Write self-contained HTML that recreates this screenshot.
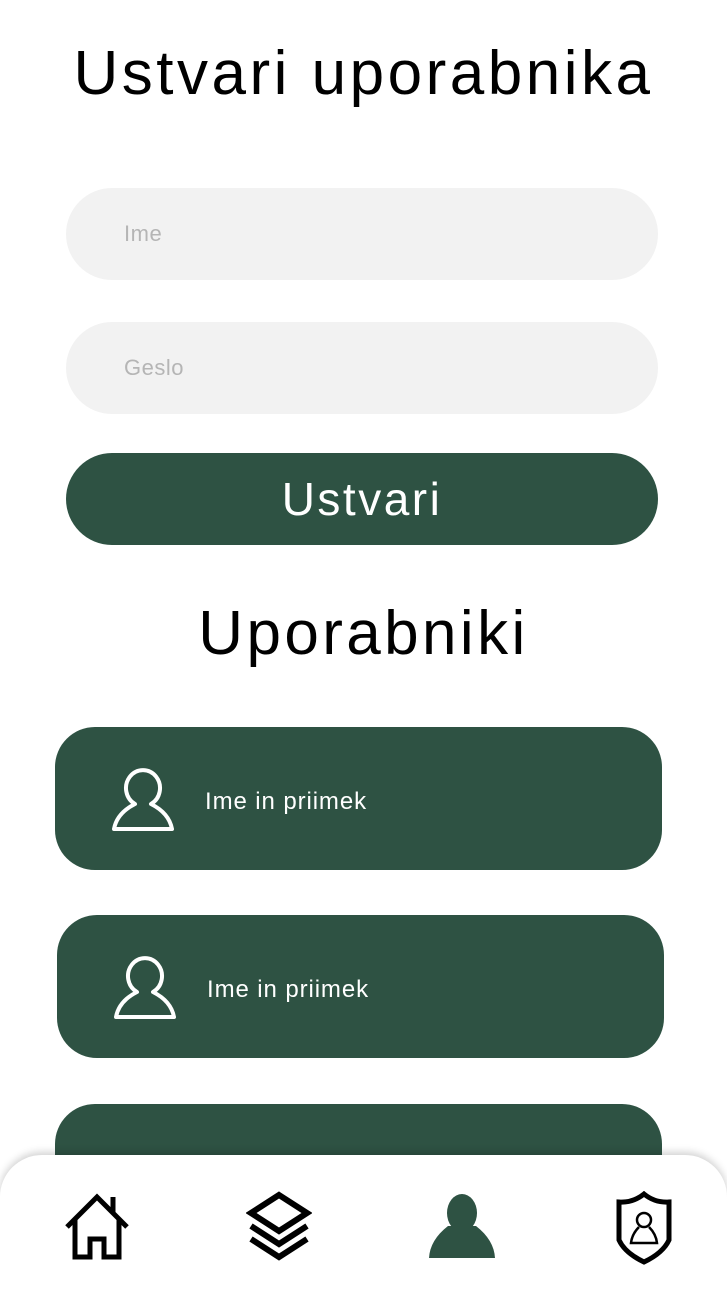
<!DOCTYPE html>
<html><head><meta charset="utf-8"><style>
*{margin:0;padding:0;box-sizing:border-box}
body{width:727px;height:1284px;background:#fff;position:relative;overflow:hidden;font-family:"Liberation Sans",sans-serif}
.t{position:absolute;left:0;width:727px;text-align:center;color:#000;font-size:62px}
.in{position:absolute;left:66px;width:592px;height:92px;border-radius:46px;background:#f2f2f2;color:#b5b5b5;font-size:22px;line-height:92px;padding-left:58px;letter-spacing:.5px}
.btn{position:absolute;left:66px;top:453px;width:592px;height:92px;border-radius:46px;background:#2e5243;color:#fff;font-size:46px;text-align:center;line-height:92px;letter-spacing:2.5px}
.card{position:absolute;width:607px;height:143px;border-radius:40px;background:#2e5243;color:#fff;font-size:24px;letter-spacing:.9px}
.card span{position:absolute;left:150px;top:61px}
.card svg{position:absolute;left:56px;top:40px}
.nav{position:absolute;left:0;top:1155px;width:727px;height:140px;background:#fff;border-radius:42px 42px 0 0;box-shadow:0 -3px 8px rgba(0,0,0,.18)}
.nav svg{position:absolute}
</style></head><body>
<div class="t" style="top:38px;letter-spacing:3.5px">Ustvari uporabnika</div>
<div class="in" style="top:188px">Ime</div>
<div class="in" style="top:322px">Geslo</div>
<div class="btn">Ustvari</div>
<div class="t" style="top:598px;letter-spacing:3.4px">Uporabniki</div>
<div class="card" style="left:55px;top:727px"><svg width="66" height="66" viewBox="0 0 66 66"><path d="M24 37 A17 18 0 1 1 40 37 Q58 46 61 62 H3 Q6 46 24 37 Z" fill="none" stroke="#fff" stroke-width="4" stroke-linejoin="round"/></svg><span>Ime in priimek</span></div>
<div class="card" style="left:57px;top:915px"><svg width="66" height="66" viewBox="0 0 66 66"><path d="M24 37 A17 18 0 1 1 40 37 Q58 46 61 62 H3 Q6 46 24 37 Z" fill="none" stroke="#fff" stroke-width="4" stroke-linejoin="round"/></svg><span>Ime in priimek</span></div>
<div class="card" style="left:55px;top:1104px"><svg width="66" height="66" viewBox="0 0 66 66"><circle cx="32" cy="63" r="17" fill="none" stroke="#fff" stroke-width="4"/></svg></div>
<div class="nav">
<svg style="left:64px;top:38px" width="66" height="68" viewBox="0 0 66 68"><path d="M3 34 L33 4 L63 34 M11 27 V64 H26 V46 H40 V64 H55 V27 M49 4 V19" fill="none" stroke="#000" stroke-width="5"/></svg>
<svg style="left:246px;top:36px" width="66" height="70" viewBox="0 0 66 70"><path d="M33 4 L61 22 L33 40 L5 22 Z" fill="none" stroke="#000" stroke-width="6"/><path d="M5 35 L33 53 L61 35 M5 48 L33 66 L61 48" fill="none" stroke="#000" stroke-width="6"/></svg>
<svg style="left:428px;top:37px" width="68" height="68" viewBox="0 0 68 68"><ellipse cx="34" cy="21" rx="15" ry="19" fill="#2e5243"/><path d="M20 34 Q2 48 1 66 H67 Q66 48 48 34 Z" fill="#2e5243"/></svg>
<svg style="left:615px;top:36px" width="58" height="74" viewBox="0 0 58 74"><path d="M29 3 Q40 12 54 11 V49 Q48 62 29 71 Q10 62 4 49 V11 Q18 12 29 3 Z" fill="none" stroke="#000" stroke-width="5"/><circle cx="29" cy="29" r="7" fill="none" stroke="#000" stroke-width="2.5"/><path d="M24 36 Q17 43 16 52 H42 Q41 43 34 36" fill="none" stroke="#000" stroke-width="2.5"/></svg>
</div>
</body></html>
